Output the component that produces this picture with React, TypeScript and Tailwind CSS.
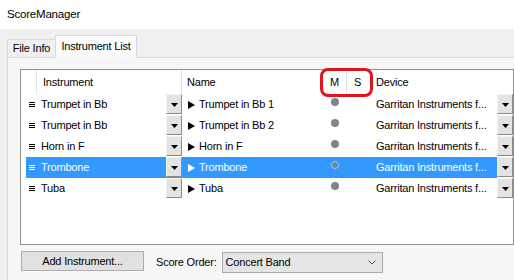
import React from "react";

type Row = { inst: string; name: string; selected?: boolean };

const rows: Row[] = [
  { inst: "Trumpet in Bb", name: "Trumpet in Bb 1" },
  { inst: "Trumpet in Bb", name: "Trumpet in Bb 2" },
  { inst: "Horn in F", name: "Horn in F" },
  { inst: "Trombone", name: "Trombone", selected: true },
  { inst: "Tuba", name: "Tuba" },
];

function DropButton() {
  return (
    <div className="flex h-[20px] w-[16px] shrink-0 items-center justify-center border border-t-[#f4f4f4] border-l-[#f4f4f4] border-r-[#8c8c8c] border-b-[#8c8c8c] bg-[#e3e3e3]">
      <svg width="7" height="4" viewBox="0 0 7 4" className="mt-[2px]">
        <path d="M0 0h7L3.5 4z" fill="#000" />
      </svg>
    </div>
  );
}

function Grip({ color }: { color: string }) {
  return (
    <svg width="6" height="5" viewBox="0 0 6 5" className="shrink-0">
      <rect x="0" y="0" width="6" height="1" fill={color} />
      <rect x="0" y="2" width="6" height="1" fill={color} />
      <rect x="0" y="4" width="6" height="1" fill={color} />
    </svg>
  );
}

function Play({ color }: { color: string }) {
  return (
    <svg width="7" height="8" viewBox="0 0 7 8" className="shrink-0">
      <path d="M0 0L7 4L0 8z" fill={color} />
    </svg>
  );
}

function GridRow({ row }: { row: Row }) {
  const sel = !!row.selected;
  const bg = sel ? "bg-[#3399ff] text-white" : "bg-white text-black";
  return (
    <div className="flex h-[21px]">
      <div className="w-[5px] shrink-0" />
      <div className={`flex w-[156px] shrink-0 items-center ${bg}`}>
        <div className="flex w-[11px] justify-end pr-[2px]">
          <Grip color={sel ? "#ffffff" : "#000000"} />
        </div>
        <span className="ml-[4px] flex-1 whitespace-nowrap">{row.inst}</span>
        <div className="self-start">
          <DropButton />
        </div>
      </div>
      <div className={`flex w-[138px] shrink-0 items-center pl-[6px] ${bg}`}>
        <Play color={sel ? "#ffffff" : "#000000"} />
        <span className="ml-[4px] whitespace-nowrap">{row.name}</span>
      </div>
      <div className={`flex w-[27px] shrink-0 justify-center pt-[4px] pl-[3px] ${bg}`}>
        <div
          className={`h-[8px] w-[8px] rounded-full ${
            sel ? "border border-[#a9c4e0] bg-[#6f8297]" : "bg-[#7c8590]"
          }`}
        />
      </div>
      <div className={`w-[23px] shrink-0 ${bg}`} />
      <div className={`flex w-[127px] shrink-0 items-center pl-[6px] ${bg}`}>
        <span className="whitespace-nowrap">Garritan Instruments f...</span>
      </div>
      <div className="self-start">
        <DropButton />
      </div>
    </div>
  );
}

export default function App() {
  return (
    <div className="relative h-[280px] w-[514px] overflow-hidden whitespace-nowrap bg-[#f0f0f0] font-['Liberation_Sans',Arial,sans-serif] text-[11px] tracking-[-0.2px] text-black">
      <div className="flex h-[29px] items-center bg-white pl-[7px] text-[11.5px]">ScoreManager</div>

      <div className="pl-[7px]">
        <div className="flex h-[28px] items-end">
          <div className="flex h-[18px] w-[48px] items-center justify-center border-t border-l border-[#d9d9d9] bg-[#f0f0f0]">
            File Info
          </div>
          <div className="relative z-10 -mb-px flex h-[23px] w-[82px] items-center justify-center border border-b-0 border-[#d9d9d9] bg-[#fbfbfb] pb-[2px]">
            Instrument List
          </div>
        </div>

        <div className="h-[240px] border border-r-0 border-[#d9d9d9] bg-[#f7f7f7] pt-[11px] pl-[12px]">
          <div className="h-[176px] w-[494px] border border-[#8f8f8f] bg-white">
            <div className="flex h-[24px] items-center">
              <div className="h-full w-[16px] shrink-0 border-r border-[#e3e3e3]" />
              <div className="flex h-full w-[145px] shrink-0 items-center border-r border-[#e3e3e3] pl-[6px]">
                Instrument
              </div>
              <div className="flex h-full w-[138px] shrink-0 items-center pl-[5px]">Name</div>
              <div className="flex h-full w-[27px] shrink-0 items-center justify-center border-r border-[#e3e3e3] pl-[3px]">
                M
              </div>
              <div className="flex h-full w-[23px] shrink-0 items-center pl-[7px]">S</div>
              <div className="flex h-full flex-1 items-center pl-[6px]">Device</div>
            </div>
            {rows.map((r, i) => (
              <GridRow key={i} row={r} />
            ))}
          </div>

          <div className="mt-[6px] flex items-center">
            <div className="ml-px flex h-[20px] w-[123px] items-center justify-center self-start border border-[#adadad] bg-[#e1e1e1]">
              Add Instrument...
            </div>
            <span className="ml-[12px] mt-px">Score Order:</span>
            <div className="ml-[5px] mt-px flex h-[21px] w-[161px] items-center justify-between border border-[#acacac] bg-[#e5e5e5] pl-[3px] pr-[6px]">
              <span>Concert Band</span>
              <svg width="8" height="5" viewBox="0 0 8 5">
                <path d="M0.5 0.5L4 4L7.5 0.5" fill="none" stroke="#555" strokeWidth="1" />
              </svg>
            </div>
          </div>
        </div>
      </div>

      <div className="absolute left-[320px] top-[68px] h-[29px] w-[53px] rounded-[8px] border-[3px] border-[#e0141e]" />
    </div>
  );
}
